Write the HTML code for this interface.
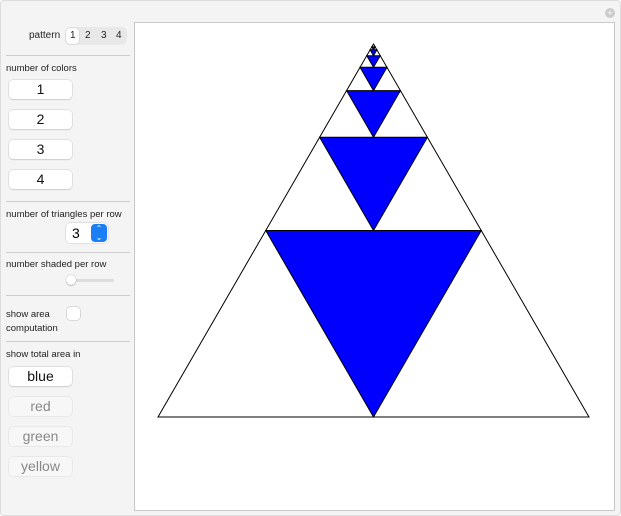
<!DOCTYPE html>
<html><head><style>
body{margin:0;width:621px;height:516px;background:#fff;font-family:"Liberation Sans",sans-serif;position:relative;overflow:hidden}
.outer{position:absolute;left:0;top:0;width:619px;height:514px;background:#f4f4f4;border:1px solid #ddd;border-radius:4px}
.lbl{position:absolute;font-size:10px;color:#222}
.hr{position:absolute;left:6px;width:124px;height:1px;background:#ccc}
.btn{position:absolute;left:9px;width:63px;height:19px;background:#fff;border-radius:4px;box-shadow:0 0 0 0.5px #ccc,0 1px 1px rgba(0,0,0,.15);text-align:center;font-size:14px;line-height:19px;color:#111}
.dis{background:#f7f7f7;color:#888;box-shadow:0 0 0 0.5px #ddd}
.plot{position:absolute;left:134px;top:22px;width:479px;height:487px;background:#fff;border:1px solid #c8c8c8}
</style></head><body>
<div class="outer"></div>
<div style="position:absolute;right:6px;top:8px;width:10px;height:10px;border-radius:50%;background:#ccc;color:#fff;font-size:9px;line-height:10px;text-align:center">+</div>
<div class="lbl" style="left:29px;top:30px">pattern</div>
<div style="position:absolute;left:65px;top:27px;width:62px;height:18px;background:#e8e8e8;border-radius:5px"></div>
<div style="position:absolute;left:66px;top:28px;width:13px;height:16px;background:#fff;border-radius:4px;box-shadow:0 0 1px #999"></div>
<div class="lbl" style="left:70px;top:30px">1</div>
<div class="lbl" style="left:85px;top:30px">2</div>
<div class="lbl" style="left:101px;top:30px">3</div>
<div class="lbl" style="left:116px;top:30px">4</div>
<div class="hr" style="top:55px"></div>
<div class="lbl" style="left:6px;top:63px;font-size:9.5px">number of colors</div>
<div class="btn" style="top:80px">1</div>
<div class="btn" style="top:110px">2</div>
<div class="btn" style="top:140px">3</div>
<div class="btn" style="top:170px">4</div>
<div class="hr" style="top:201px"></div>
<div class="lbl" style="left:6px;top:209px;font-size:9.5px">number of triangles per row</div>
<div style="position:absolute;left:66px;top:223px;width:42px;height:20px;background:#fff;border-radius:4px;box-shadow:0 0 0 0.5px #ccc"></div>
<div style="position:absolute;left:72px;top:225px;font-size:14px">3</div>
<div style="position:absolute;left:91px;top:224px;width:16px;height:18px;background:#1a7ff7;border-radius:4px;color:#fff;font-size:8px;text-align:center;line-height:9px">⌃<br>⌄</div>
<div class="hr" style="top:252px"></div>
<div class="lbl" style="left:6px;top:259px;font-size:9.5px">number shaded per row</div>
<div style="position:absolute;left:68px;top:279px;width:46px;height:3px;background:#ddd;border-radius:2px"></div>
<div style="position:absolute;left:66px;top:275px;width:10px;height:10px;border-radius:50%;background:#fff;box-shadow:0 0 1px #888,0 1px 1px rgba(0,0,0,.2)"></div>
<div class="hr" style="top:295px"></div>
<div class="lbl" style="left:6px;top:308px;font-size:9.5px;line-height:14px">show area<br>computation</div>
<div style="position:absolute;left:67px;top:307px;width:13px;height:13px;background:#fff;border-radius:3px;box-shadow:0 0 0 0.5px #bbb"></div>
<div class="hr" style="top:341px"></div>
<div class="lbl" style="left:6px;top:349px;font-size:9.5px">show total area in</div>
<div class="btn" style="top:367px">blue</div>
<div class="btn dis" style="top:397px">red</div>
<div class="btn dis" style="top:427px">green</div>
<div class="btn dis" style="top:457px">yellow</div>
<div class="plot"></div>
<svg style="position:absolute;left:0;top:0" width="621" height="516">
<g fill="#0000ff" stroke="#000" stroke-width="1">
<polygon points="158,417 589,417 373.5,44" fill="#fff"/>
<polygon points="265.75,230.5 481.25,230.5 373.5,417"/>
<polygon points="319.6,137.25 427.4,137.25 373.5,230.5"/>
<polygon points="346.6,90.6 400.4,90.6 373.5,137.25"/>
<polygon points="360,67.3 387,67.3 373.5,90.6"/>
<polygon points="366.8,55.7 380.2,55.7 373.5,67.3"/>
<polygon points="370.1,49.8 376.9,49.8 373.5,55.7"/>
<polygon points="371.8,46.9 375.2,46.9 373.5,49.8"/>
</g>
</svg>
</body></html>
